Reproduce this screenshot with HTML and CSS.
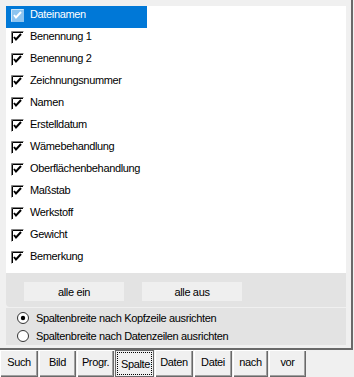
FILE: index.html
```html
<!DOCTYPE html>
<html lang="de">
<head>
    <meta charset="UTF-8">
    <title>Spalten</title>
    <link rel="stylesheet" href="styles.css">
</head>
<body>
    <div class="dialog">
        <div class="panel">
            <ul class="fields">
                <li class="row selected">
                    <svg class="check" width="13" height="13" viewBox="0 0 13 13">
                        <rect x="0" y="0" width="13" height="13" fill="#8cc4f0"/>
                        <path d="M0.5 12.5V0.5H12.5" stroke="#cfe6f9" fill="none"/>
                        <path d="M3 6l2 2.5L10 3" stroke="#fff" stroke-width="2" fill="none"/>
                    </svg>
                    <span>Dateinamen</span>
                </li>
                <li class="row"><svg class="check" width="13" height="13" viewBox="0 0 13 13"><path d="M0.5 12.5V0.5H12.5" stroke="#808080" fill="none"/><path d="M1.5 12V1.5H12" stroke="#000" fill="none"/><path d="M3 6l2 2.5L10 3" stroke="#000" stroke-width="2" fill="none"/></svg><span>Benennung 1</span></li>
                <li class="row"><svg class="check" width="13" height="13" viewBox="0 0 13 13"><path d="M0.5 12.5V0.5H12.5" stroke="#808080" fill="none"/><path d="M1.5 12V1.5H12" stroke="#000" fill="none"/><path d="M3 6l2 2.5L10 3" stroke="#000" stroke-width="2" fill="none"/></svg><span>Benennung 2</span></li>
                <li class="row"><svg class="check" width="13" height="13" viewBox="0 0 13 13"><path d="M0.5 12.5V0.5H12.5" stroke="#808080" fill="none"/><path d="M1.5 12V1.5H12" stroke="#000" fill="none"/><path d="M3 6l2 2.5L10 3" stroke="#000" stroke-width="2" fill="none"/></svg><span>Zeichnungsnummer</span></li>
                <li class="row"><svg class="check" width="13" height="13" viewBox="0 0 13 13"><path d="M0.5 12.5V0.5H12.5" stroke="#808080" fill="none"/><path d="M1.5 12V1.5H12" stroke="#000" fill="none"/><path d="M3 6l2 2.5L10 3" stroke="#000" stroke-width="2" fill="none"/></svg><span>Namen</span></li>
                <li class="row"><svg class="check" width="13" height="13" viewBox="0 0 13 13"><path d="M0.5 12.5V0.5H12.5" stroke="#808080" fill="none"/><path d="M1.5 12V1.5H12" stroke="#000" fill="none"/><path d="M3 6l2 2.5L10 3" stroke="#000" stroke-width="2" fill="none"/></svg><span>Erstelldatum</span></li>
                <li class="row"><svg class="check" width="13" height="13" viewBox="0 0 13 13"><path d="M0.5 12.5V0.5H12.5" stroke="#808080" fill="none"/><path d="M1.5 12V1.5H12" stroke="#000" fill="none"/><path d="M3 6l2 2.5L10 3" stroke="#000" stroke-width="2" fill="none"/></svg><span>Wämebehandlung</span></li>
                <li class="row"><svg class="check" width="13" height="13" viewBox="0 0 13 13"><path d="M0.5 12.5V0.5H12.5" stroke="#808080" fill="none"/><path d="M1.5 12V1.5H12" stroke="#000" fill="none"/><path d="M3 6l2 2.5L10 3" stroke="#000" stroke-width="2" fill="none"/></svg><span>Oberflächenbehandlung</span></li>
                <li class="row"><svg class="check" width="13" height="13" viewBox="0 0 13 13"><path d="M0.5 12.5V0.5H12.5" stroke="#808080" fill="none"/><path d="M1.5 12V1.5H12" stroke="#000" fill="none"/><path d="M3 6l2 2.5L10 3" stroke="#000" stroke-width="2" fill="none"/></svg><span>Maßstab</span></li>
                <li class="row"><svg class="check" width="13" height="13" viewBox="0 0 13 13"><path d="M0.5 12.5V0.5H12.5" stroke="#808080" fill="none"/><path d="M1.5 12V1.5H12" stroke="#000" fill="none"/><path d="M3 6l2 2.5L10 3" stroke="#000" stroke-width="2" fill="none"/></svg><span>Werkstoff</span></li>
                <li class="row"><svg class="check" width="13" height="13" viewBox="0 0 13 13"><path d="M0.5 12.5V0.5H12.5" stroke="#808080" fill="none"/><path d="M1.5 12V1.5H12" stroke="#000" fill="none"/><path d="M3 6l2 2.5L10 3" stroke="#000" stroke-width="2" fill="none"/></svg><span>Gewicht</span></li>
                <li class="row"><svg class="check" width="13" height="13" viewBox="0 0 13 13"><path d="M0.5 12.5V0.5H12.5" stroke="#808080" fill="none"/><path d="M1.5 12V1.5H12" stroke="#000" fill="none"/><path d="M3 6l2 2.5L10 3" stroke="#000" stroke-width="2" fill="none"/></svg><span>Bemerkung</span></li>
            </ul>

            <div class="actions">
                <button class="flat">alle ein</button>
                <button class="flat">alle aus</button>
            </div>

            <div class="options">
                <label class="option">
                    <svg width="12" height="12" viewBox="0 0 12 12"><circle cx="6" cy="6" r="5.5" fill="#fff" stroke="#333"/><circle cx="6" cy="6" r="2.2" fill="#000"/></svg>
                    <span>Spaltenbreite nach Kopfzeile ausrichten</span>
                </label>
                <label class="option">
                    <svg width="12" height="12" viewBox="0 0 12 12"><circle cx="6" cy="6" r="5.5" fill="#fff" stroke="#333"/></svg>
                    <span>Spaltenbreite nach Datenzeilen ausrichten</span>
                </label>
            </div>
        </div>

        <div class="tabs">
            <button class="tab w38">Such</button>
            <button class="tab">Bild</button>
            <button class="tab">Progr.</button>
            <button class="tab w39 pressed">Spalte</button>
            <button class="tab w38">Daten</button>
            <button class="tab w38">Datei</button>
            <button class="tab w35">nach</button>
            <button class="tab">vor</button>
        </div>
    </div>
</body>
</html>
```

FILE: styles.css
```css
body {
    margin: 0;
    background-color: #f0f0f0;
    font-family: "Liberation Sans", Arial, sans-serif;
    font-size: 11px;
    letter-spacing: -0.35px;
    color: #000;
}
.dialog {
    width: 354px;
    height: 377px;
    overflow: hidden;
}
.panel {
    width: 340px;
    padding: 6px 5px 3px 6px;
    border-right: 2px solid #696969;
    border-bottom: 2px solid #696969;
}
.fields {
    list-style: none;
    margin: 0;
    padding: 0 0 3px;
    background-color: #fff;
}
.row {
    display: flex;
    align-items: flex-start;
    gap: 6px;
    box-sizing: border-box;
    width: 141px;
    height: 22px;
    padding: 2px 0 0 5px;
    line-height: 13px;
    white-space: nowrap;
}
.row.selected {
    background-color: #0078d7;
    color: #fff;
}
.check {
    flex: none;
    margin-top: 1px;
}
.actions {
    display: flex;
    gap: 18px;
    height: 34px;
    box-sizing: border-box;
    padding: 9px 0 0 18px;
    background-color: #e3e3e3;
    border-bottom-left-radius: 4px;
}
.flat {
    width: 100px;
    height: 19px;
    padding: 0;
    border: none;
    background-color: #efefef;
    font: inherit;
    letter-spacing: inherit;
    color: #000;
}
.options {
    margin-top: 1px;
    padding: 1px 0 0;
    background-color: #e3e3e3;
}
.option {
    display: flex;
    align-items: center;
    gap: 7px;
    height: 18px;
    padding-left: 11px;
    white-space: nowrap;
}
.tabs {
    display: flex;
    gap: 1px;
}
.tab {
    width: 37px;
    padding: 6px 0 9px;
    line-height: 13px;
    border: none;
    background-color: #f0f0f0;
    box-shadow: inset 1px 1px #fff, inset -1px -1px #696969, inset -2px -2px #a0a0a0;
    font: inherit;
    letter-spacing: inherit;
    color: #000;
}
.w35 { width: 35px; }
.w38 { width: 38px; }
.w39 { width: 39px; }
.tab.pressed {
    padding: 8px 0 7px 2px;
    box-shadow: inset 0 0 0 1px #696969;
    outline: 1px dotted #000;
    outline-offset: -3px;
}
```
